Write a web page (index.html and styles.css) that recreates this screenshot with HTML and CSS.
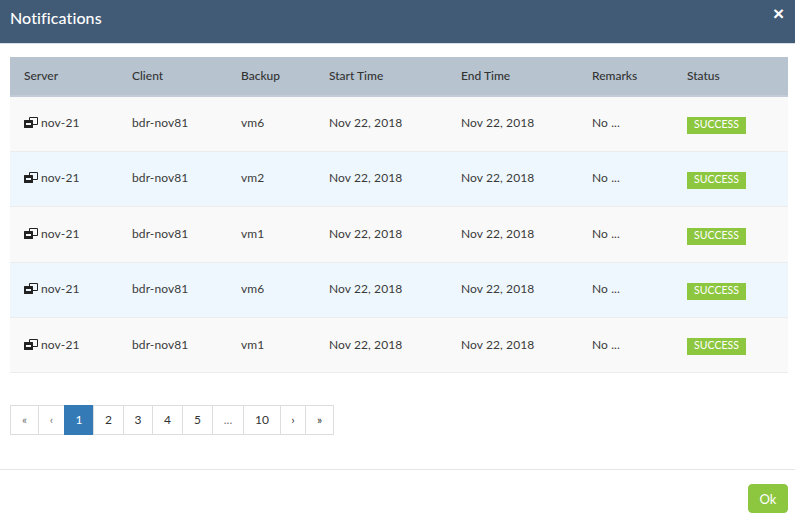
FILE: index.html
```html
<!DOCTYPE html>
<html lang="en">
<head>
<meta charset="utf-8">
<title>Notifications</title>
<link rel="stylesheet" href="styles.css">
</head>
<body>
<svg class="sprite" width="0" height="0" aria-hidden="true"><symbol id="win" viewBox="0 0 14 11"><path d="M5.5 3V.5h8v7H9" fill="none" stroke="currentColor"/><path d="M0 3.5A.5.5 0 0 1 .5 3h8a.5.5 0 0 1 .5.5v7a.5.5 0 0 1-.5.5h-8a.5.5 0 0 1-.5-.5zM2 6v2h5V6z" fill="currentColor" fill-rule="evenodd"/></symbol></svg>
<div class="modal">
  <header class="modal-head">
    <h1 class="title">Notifications</h1>
    <button class="close" type="button">×</button>
  </header>
  <main class="modal-body">
    <table class="grid">
      <colgroup><col class="c1"><col class="c2"><col class="c3"><col class="c4"><col class="c5"><col class="c6"><col class="c7"></colgroup>
      <thead>
        <tr><th>Server</th><th>Client</th><th>Backup</th><th>Start Time</th><th>End Time</th><th>Remarks</th><th>Status</th></tr>
      </thead>
      <tbody>
        <tr><td><svg class="ico"><use href="#win"/></svg>nov-21</td><td>bdr-nov81</td><td>vm6</td><td>Nov 22, 2018</td><td>Nov 22, 2018</td><td>No ...</td><td><span class="badge">SUCCESS</span></td></tr>
        <tr><td><svg class="ico"><use href="#win"/></svg>nov-21</td><td>bdr-nov81</td><td>vm2</td><td>Nov 22, 2018</td><td>Nov 22, 2018</td><td>No ...</td><td><span class="badge">SUCCESS</span></td></tr>
        <tr><td><svg class="ico"><use href="#win"/></svg>nov-21</td><td>bdr-nov81</td><td>vm1</td><td>Nov 22, 2018</td><td>Nov 22, 2018</td><td>No ...</td><td><span class="badge">SUCCESS</span></td></tr>
        <tr><td><svg class="ico"><use href="#win"/></svg>nov-21</td><td>bdr-nov81</td><td>vm6</td><td>Nov 22, 2018</td><td>Nov 22, 2018</td><td>No ...</td><td><span class="badge">SUCCESS</span></td></tr>
        <tr><td><svg class="ico"><use href="#win"/></svg>nov-21</td><td>bdr-nov81</td><td>vm1</td><td>Nov 22, 2018</td><td>Nov 22, 2018</td><td>No ...</td><td><span class="badge">SUCCESS</span></td></tr>
      </tbody>
    </table>
    <nav class="pager">
      <a class="pg w28 dim">«</a><a class="pg w26 dim">‹</a><a class="pg w29 on">1</a><a class="pg w30">2</a><a class="pg w29">3</a><a class="pg w30">4</a><a class="pg w30">5</a><a class="pg w31 dim">...</a><a class="pg w37">10</a><a class="pg w25">›</a><a class="pg w28">»</a>
    </nav>
  </main>
  <footer class="modal-foot"><button class="ok" type="button">Ok</button></footer>
</div>
</body>
</html>
```
FILE: styles.css
```css
* { box-sizing: border-box; }
html, body { margin: 0; height: 100%; }
body { font-family: Lato, sans-serif; font-size: 13px; color: #333; background: #fff; overflow: hidden; }
.sprite { position: absolute; }
.modal { width: 795px; height: 520px; display: flex; flex-direction: column; }
.modal-head { height: 44px; flex: none; background: #415a75; border-bottom: 1px solid #d5dde6; display: flex; justify-content: space-between; padding: 8px 11px 0 10px; color: #fff; }
.title { margin: 0; font-size: 16px; font-weight: 500; line-height: 20px; letter-spacing: .1px; }
.close { border: 0; background: none; color: #fff; font: 700 19px/1 "Liberation Sans", sans-serif; padding: 0; height: 14px; margin-top: -1px; line-height: 14px; }
.modal-body { flex: none; height: 426px; padding: 13px 7px 0 10px; border-bottom: 1px solid #e5e5e5; }
.grid { width: 778px; table-layout: fixed; border-collapse: collapse; }
.c1 { width: 108px; } .c2 { width: 109px; } .c3 { width: 88px; } .c4 { width: 132px; } .c5 { width: 131px; } .c6 { width: 95px; } .c7 { width: 115px; }
th { background: #b7c4d0; height: 39px; padding: 0 0 2px 14px; text-align: left; font-weight: 500; font-size: 12px; color: #333; border-bottom: 2px solid #c3cbd8; }
td { padding: 0 0 2.2px 14px; height: 55.4px; border-bottom: 1px solid #ececec; font-size: 12px; font-weight: 400; color: #3a3a3a; letter-spacing: .1px; white-space: nowrap; }
tbody tr:nth-child(odd) td { background: #f9f9f9; }
tbody tr:nth-child(even) td { background: #eff7fe; }
.ico { width: 14px; height: 11px; margin-right: 3px; vertical-align: -1px; color: #222; }
.badge { display: inline-block; width: 59px; height: 17px; margin-top: 5.6px; background: #8dc63f; color: #fff; font-size: 10.5px; font-weight: 400; line-height: 15px; text-align: center; letter-spacing: 0; vertical-align: middle; }
.pager { display: flex; margin-top: 32px; width: max-content; height: 30px; }
.pg { display: flex; align-items: center; justify-content: center; border: 1px solid #ddd; margin-left: -1px; color: #333; font-size: 12px; background: #fff; padding-bottom: 1px; }
.pg:first-child { margin-left: 0; }
.dim { color: #777; }
.on { background: #337ab7; border-color: #337ab7; color: #fff; }
.w28 { width: 29px; } .w26 { width: 27px; } .w30 { width: 31px; } .w29 { width: 30px; } .w31 { width: 32px; } .w37 { width: 38px; } .w25 { width: 26px; }
.modal-foot { flex: 1; display: flex; justify-content: flex-end; padding: 14px 7px 0 0; }
.ok { width: 40px; height: 29px; border: 1px solid #8dc63f; border-radius: 4px; background: #8dc63f; color: #fff; font: 13px Lato, sans-serif; padding: 0; }
```
